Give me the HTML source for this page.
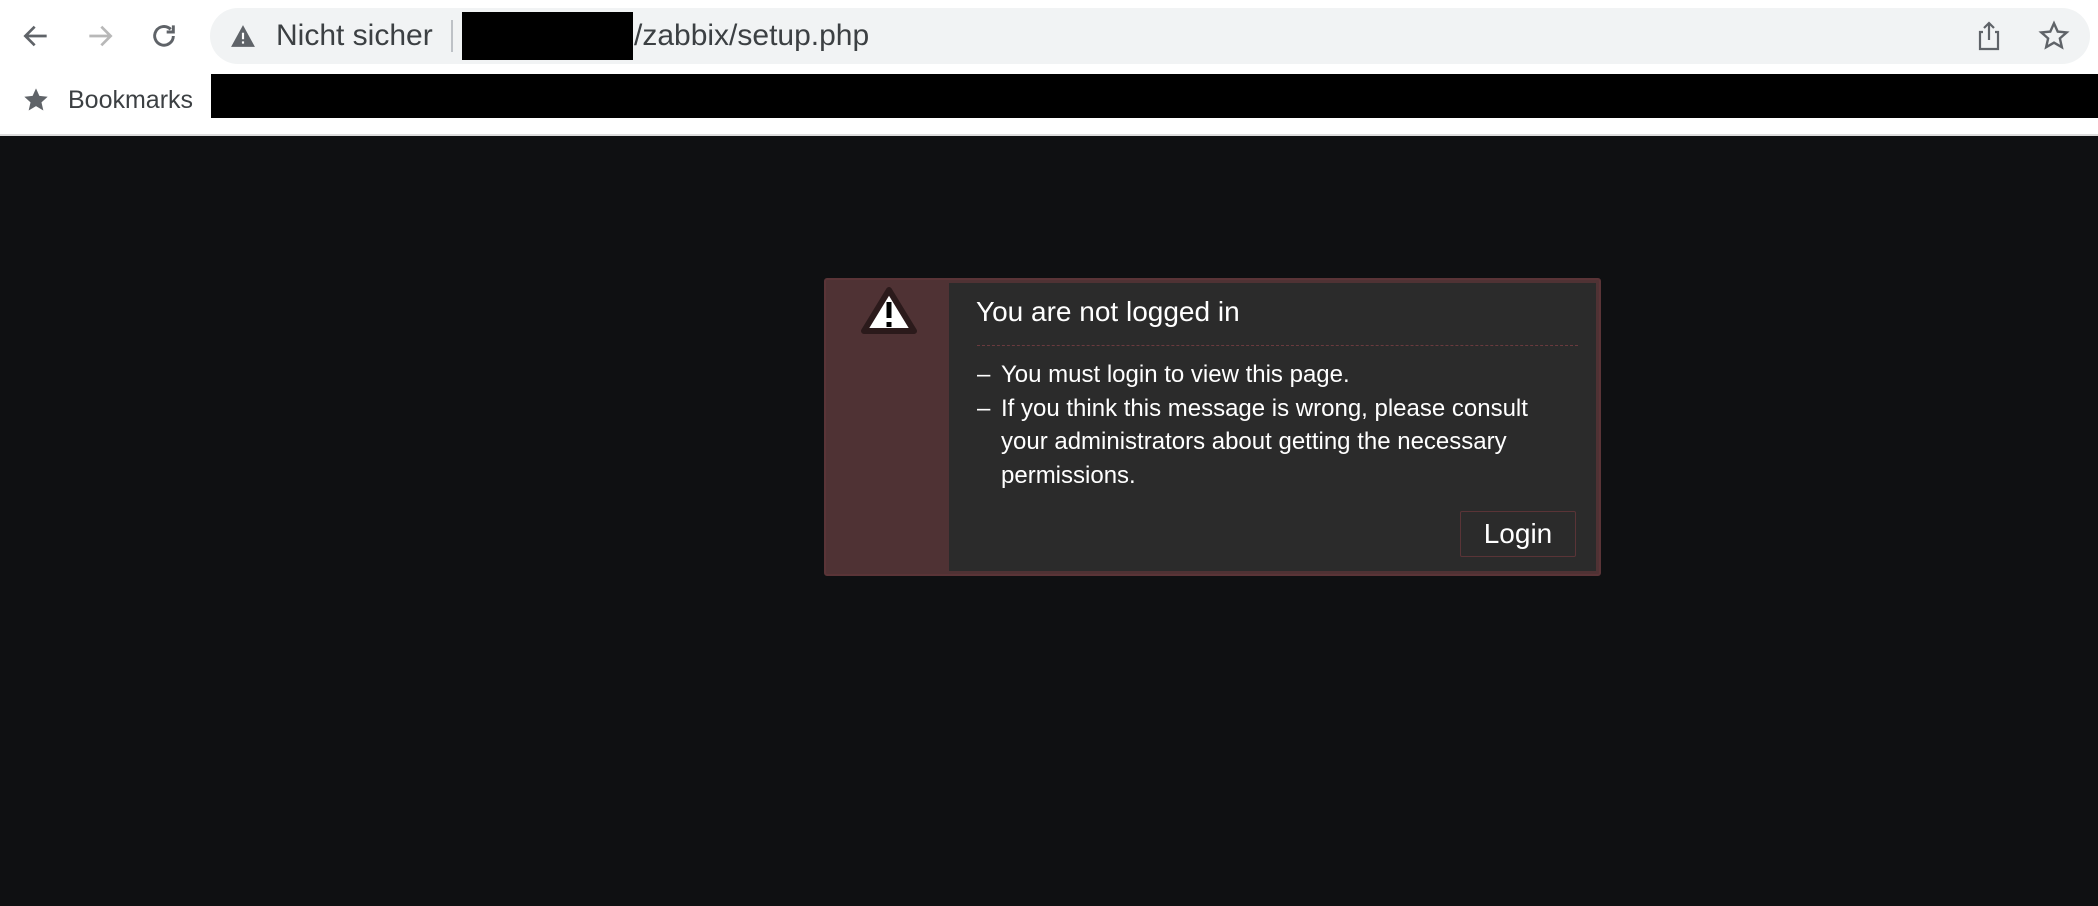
<!DOCTYPE html>
<html><head><meta charset="utf-8"><style>
*{margin:0;padding:0;box-sizing:border-box}
body{width:2098px;height:906px;overflow:hidden;background:#0f1012;font-family:"Liberation Sans",Arial,sans-serif;position:relative}
.chrome{position:absolute;left:0;top:0;width:2098px;height:136px;background:#fff;border-bottom:2px solid #dcdcdc}
.pill{position:absolute;left:210px;top:8px;width:1880px;height:56px;background:#f1f3f4;border-radius:28px}
.url{position:absolute;top:19px;font-size:30px;color:#3c4043;line-height:34px}
.abs{position:absolute}
.box{position:absolute;left:824px;top:278px;width:777px;height:298px;background:#4f3234;border:2px solid #5a3437;border-radius:3px}
.inner{position:absolute;left:123px;top:3px;right:3px;bottom:3px;background:#2b2b2b}
.t{position:absolute;left:27px;top:13px;font-size:28px;color:#fff}
.dash{position:absolute;left:28px;right:18px;top:62px;border-top:1px dashed #6a3a3e}
ul{position:absolute;left:28px;top:75px;list-style:none;color:#fff;font-size:24px;line-height:33.5px;width:558px}
li{padding-left:24px;position:relative}
li:before{content:"–";position:absolute;left:0}
.btn{position:absolute;right:20px;bottom:14px;width:116px;height:46px;border:1px solid #5a3437;border-radius:2px;color:#fff;font-size:28px;text-align:center;line-height:44px}
</style></head><body>
<div class="chrome">
<svg class="abs" style="left:20px;top:20px" width="32" height="32" viewBox="0 0 24 24"><path d="M20 12H5M11 5l-7 7 7 7" stroke="#5f6368" stroke-width="2" fill="none"/></svg>
<svg class="abs" style="left:84px;top:20px" width="32" height="32" viewBox="0 0 24 24"><path d="M4 12h15M13 5l7 7-7 7" stroke="#b8b8b8" stroke-width="2" fill="none"/></svg>
<svg class="abs" style="left:148px;top:20px" width="32" height="32" viewBox="0 0 24 24"><path d="M19 12a7 7 0 1 1-2-5M19 4v5h-5" stroke="#5f6368" stroke-width="2.2" fill="none"/></svg>
<div class="pill"></div>
<svg class="abs" style="left:230px;top:24px" width="26" height="24" viewBox="0 0 24 22"><path d="M12 1L23 21H1z" fill="#5f6368"/><path d="M12 8v6M12 16v2" stroke="#fff" stroke-width="2"/></svg>
<div class="url" style="left:276px">Nicht sicher</div>
<div class="abs" style="left:451px;top:20px;width:2px;height:32px;background:#bdc1c6"></div>
<div class="abs" style="left:462px;top:12px;width:171px;height:48px;background:#000"></div>
<div class="url" style="left:634px">/zabbix/setup.php</div>
<svg class="abs" style="left:1976px;top:20px" width="26" height="32" viewBox="0 0 26 32"><path d="M7 12H4v17h18V12h-3M13 20V3M8 8l5-5 5 5" stroke="#5f6368" stroke-width="2.2" fill="none"/></svg>
<svg class="abs" style="left:2038px;top:20px" width="32" height="32" viewBox="0 0 24 24"><path d="M12 2.5l2.8 6.2 6.7.6-5.1 4.5 1.5 6.6L12 17l-5.9 3.4 1.5-6.6-5.1-4.5 6.7-.6z" stroke="#5f6368" stroke-width="1.8" fill="none"/></svg>
<svg class="abs" style="left:22px;top:86px" width="28" height="28" viewBox="0 0 24 24"><path d="M12 2l2.9 6.5 7.1.7-5.3 4.8 1.6 7L12 17.3 5.7 21l1.6-7L2 9.2l7.1-.7z" fill="#5f6368"/></svg>
<div class="url" style="left:68px;top:83px;font-size:25px;color:#3c4043">Bookmarks</div>
<div class="abs" style="left:211px;top:74px;width:1887px;height:44px;background:#000"></div>
</div>
<div class="box">
<svg class="abs" style="left:34px;top:6px" width="58" height="50" viewBox="0 0 58 50"><path d="M29 4L54 45H4z" fill="#fff" stroke="#2b1a1b" stroke-width="6" stroke-linejoin="round"/><rect x="26.5" y="16" width="5" height="16" fill="#000"/><rect x="26.5" y="36" width="5" height="5" fill="#000"/></svg>
<div class="inner">
<div class="t">You are not logged in</div>
<div class="dash"></div>
<ul><li>You must login to view this page.</li><li>If you think this message is wrong, please consult your administrators about getting the necessary permissions.</li></ul>
<div class="btn">Login</div>
</div>
</div>
</body></html>
